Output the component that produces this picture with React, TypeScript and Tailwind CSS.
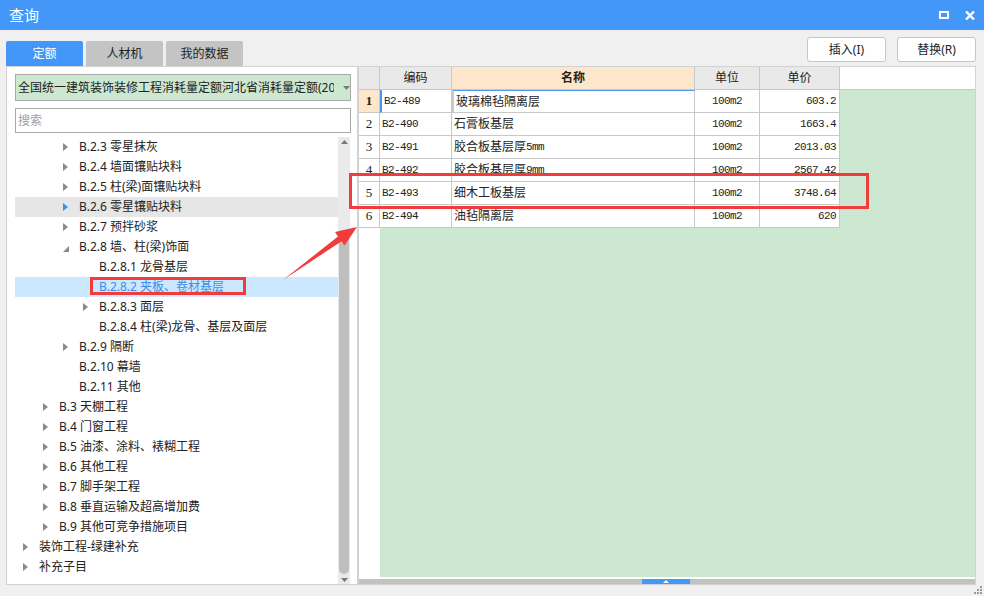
import React from "react";

type TreeRow = { lv: number; arrow?: "r" | "d"; text: string; hover?: boolean; selected?: boolean };

const tree: TreeRow[] = [
  { lv: 2, arrow: "r", text: "B.2.3 零星抹灰" },
  { lv: 2, arrow: "r", text: "B.2.4 墙面镶贴块料" },
  { lv: 2, arrow: "r", text: "B.2.5 柱(梁)面镶贴块料" },
  { lv: 2, arrow: "r", text: "B.2.6 零星镶贴块料", hover: true },
  { lv: 2, arrow: "r", text: "B.2.7 预拌砂浆" },
  { lv: 2, arrow: "d", text: "B.2.8 墙、柱(梁)饰面" },
  { lv: 3, text: "B.2.8.1 龙骨基层" },
  { lv: 3, text: "B.2.8.2 夹板、卷材基层", selected: true },
  { lv: 3, arrow: "r", text: "B.2.8.3 面层" },
  { lv: 3, text: "B.2.8.4 柱(梁)龙骨、基层及面层" },
  { lv: 2, arrow: "r", text: "B.2.9 隔断" },
  { lv: 2, text: "B.2.10 幕墙" },
  { lv: 2, text: "B.2.11 其他" },
  { lv: 1, arrow: "r", text: "B.3 天棚工程" },
  { lv: 1, arrow: "r", text: "B.4 门窗工程" },
  { lv: 1, arrow: "r", text: "B.5 油漆、涂料、裱糊工程" },
  { lv: 1, arrow: "r", text: "B.6 其他工程" },
  { lv: 1, arrow: "r", text: "B.7 脚手架工程" },
  { lv: 1, arrow: "r", text: "B.8 垂直运输及超高增加费" },
  { lv: 1, arrow: "r", text: "B.9 其他可竞争措施项目" },
  { lv: 0, arrow: "r", text: "装饰工程-绿建补充" },
  { lv: 0, arrow: "r", text: "补充子目" },
];

const rows = [
  { code: "B2-489", name: "玻璃棉毡隔离层", unit: "100m2", price: "603.2" },
  { code: "B2-490", name: "石膏板基层", unit: "100m2", price: "1663.4" },
  { code: "B2-491", name: "胶合板基层厚", suffix: "5mm", unit: "100m2", price: "2013.03" },
  { code: "B2-492", name: "胶合板基层厚", suffix: "9mm", unit: "100m2", price: "2567.42" },
  { code: "B2-493", name: "细木工板基层", unit: "100m2", price: "3748.64" },
  { code: "B2-494", name: "油毡隔离层", unit: "100m2", price: "620" },
];

const mono = "font-['Liberation_Mono',monospace] text-[11px] tracking-[-0.6px]";

function Arrow({ kind, blue }: { kind?: "r" | "d"; blue?: boolean }) {
  if (kind === "d")
    return (
      <svg width="6" height="6" className="mt-[3px]">
        <polygon points="6,0 6,6 0,6" fill="#8a8a8a" />
      </svg>
    );
  if (kind === "r")
    return (
      <svg width="5" height="8">
        <polygon points="0,0 5,4 0,8" fill={blue ? "#3d8ee8" : "#8a8a8a"} />
      </svg>
    );
  return null;
}

export default function App() {
  return (
    <div className="relative flex h-[596px] w-[984px] flex-col overflow-hidden bg-[#f0f0f0] font-['Noto_Sans','Noto_Sans_CJK_SC',sans-serif] text-[12px] text-[#222]">
      {/* title bar */}
      <div className="flex h-[30px] items-center bg-[#4297f8] pl-[9px] pr-[9px] text-white">
        <span className="text-[15px]">查询</span>
        <div className="ml-auto flex items-center gap-[16px]">
          <div className="h-[8px] w-[10px] border-2 border-white" />
          <svg width="10" height="9" viewBox="0 0 10 9">
            <path d="M1 0.5 L9 8.5 M9 0.5 L1 8.5" stroke="white" strokeWidth="2.4" />
          </svg>
        </div>
      </div>

      {/* tabs + buttons */}
      <div className="flex h-[36px] pl-[6px] pr-[8px]">
        <div className="flex items-end gap-[3px]">
          <div className="flex h-[25px] w-[77px] items-center justify-center rounded-t-[2px] bg-[#4297f8] text-white">定额</div>
          <div className="flex h-[25px] w-[77px] items-center justify-center rounded-t-[2px] bg-[#c4c4c4]">人材机</div>
          <div className="flex h-[25px] w-[77px] items-center justify-center rounded-t-[2px] bg-[#c4c4c4]">我的数据</div>
        </div>
        <div className="ml-auto flex gap-[11px] pt-[7px]">
          <button className="h-[25px] w-[79px] rounded-[3px] border border-[#c6c6c6] bg-white">插入(I)</button>
          <button className="h-[25px] w-[79px] rounded-[3px] border border-[#c6c6c6] bg-white">替换(R)</button>
        </div>
      </div>

      {/* main */}
      <div className="flex h-[519px] pl-[6px]">
        {/* left panel */}
        <div className="flex w-[352px] flex-col border border-[#d2d2d2] bg-white pl-[8px] pr-[6px] pt-[7px]">
          <div className="flex h-[27px] items-center border border-[#a9a9a9] bg-[#cde8d1] pl-[2px]">
            <span className="w-[318px] overflow-hidden whitespace-nowrap">全国统一建筑装饰装修工程消耗量定额河北省消耗量定额(2018)</span>
            <svg width="7" height="4" className="ml-[9px]">
              <polygon points="0,0 7,0 3.5,4" fill="#7a7a7a" />
            </svg>
          </div>
          <div className="mt-[7px] flex h-[25px] items-center border border-[#a9a9a9] pl-[2px] text-[#a0a0a0]">搜索</div>
          <div className="mt-[4px] flex h-[447px]">
            <div className="w-[323px]">
              {tree.map((r) => (
                <div
                  key={r.text}
                  className={`flex h-[20px] items-center whitespace-nowrap ${r.hover ? "bg-[#e6e6e6]" : ""} ${r.selected ? "bg-[#cce8ff] text-[#3a8ee6]" : ""}`}
                  style={{ paddingLeft: 8 + 20 * r.lv }}
                >
                  <div className="flex w-[16px] items-center">
                    <Arrow kind={r.arrow} blue={r.hover} />
                  </div>
                  <span>{r.text}</span>
                </div>
              ))}
            </div>
            <div className="flex w-[12px] flex-col items-center bg-[#eaeaea] pb-[2px] pt-[3px]">
              <svg width="7" height="4">
                <polygon points="0,4 7,4 3.5,0" fill="#777" />
              </svg>
              <div className="mt-[86px] w-[10px] flex-1 rounded-full bg-[#bebebe]" />
              <svg width="7" height="4" className="mt-[4px]">
                <polygon points="0,0 7,0 3.5,4" fill="#777" />
              </svg>
            </div>
          </div>
        </div>

        {/* right table panel */}
        <div className="flex w-[618px] flex-col border border-[#d2d2d2] bg-white">
          <div className="flex h-[23px] border-b border-[#c8c8c8] text-[12px]">
            <div className="w-[21px] border-r border-[#c8c8c8] bg-[#e9e9e9]" />
            <div className="flex w-[72px] items-center justify-center border-r border-[#c8c8c8] bg-[#e9e9e9]">编码</div>
            <div className="flex w-[243px] items-center justify-center border-r border-[#c8c8c8] bg-[#fde6c9] font-bold">名称</div>
            <div className="flex w-[65px] items-center justify-center border-r border-[#c8c8c8] bg-[#e9e9e9]">单位</div>
            <div className="flex w-[80px] items-center justify-center border-r border-[#c8c8c8] bg-[#e9e9e9]">单价</div>
            <div className="flex-1" />
          </div>
          {rows.map((r, i) => (
            <div key={r.code} className="flex h-[23px]">
              <div className={`flex w-[21px] items-center justify-center border-b border-r border-[#c8c8c8] font-['Liberation_Serif',serif] text-[13px] ${i === 0 ? "bg-[#fde6c9] font-bold" : ""}`}>{i + 1}</div>
              <div className={`flex w-[72px] items-center border-b border-r border-[#c8c8c8] pl-[2px] ${mono} ${i === 0 ? "border-l-2 border-l-[#4297f8] pl-0" : ""}`}>{r.code}</div>
              <div className={`flex w-[243px] items-center border-b border-r border-[#c8c8c8] pl-[2px] ${i === 0 ? "border-2 border-[#707070] border-t-[#4a9af8] border-t-[1px] pl-0" : ""}`}>
                <span>{r.name}</span>
                {r.suffix && <span className={mono}>{r.suffix}</span>}
              </div>
              <div className={`flex w-[65px] items-center justify-center border-b border-r border-[#c8c8c8] ${mono}`}>{r.unit}</div>
              <div className={`flex w-[80px] items-center justify-end border-b border-r border-[#c8c8c8] pr-[3px] ${mono}`}>{r.price}</div>
              <div className="flex-1 bg-[#cde8d1]" />
            </div>
          ))}
          <div className="flex flex-1">
            <div className="w-[21px]" />
            <div className="flex-1 bg-[#cde8d1]" />
          </div>
          <div className="mt-[2px] flex h-[5px] bg-[#c2c2c2] pl-[283px]">
            <div className="flex h-[5px] w-[48px] items-center justify-center bg-[#4297f8]">
              <svg width="6" height="3">
                <polygon points="0,3 6,3 3,0" fill="white" />
              </svg>
            </div>
          </div>
        </div>
      </div>

      {/* resize grip */}
      <svg width="9" height="9" className="absolute bottom-[1px] right-[1px]">
        <rect x="6" y="0" width="2" height="2" fill="#9a9a9a" />
        <rect x="3" y="3" width="2" height="2" fill="#9a9a9a" />
        <rect x="6" y="3" width="2" height="2" fill="#9a9a9a" />
        <rect x="0" y="6" width="2" height="2" fill="#9a9a9a" />
        <rect x="3" y="6" width="2" height="2" fill="#9a9a9a" />
        <rect x="6" y="6" width="2" height="2" fill="#9a9a9a" />
      </svg>

      {/* red annotations */}
      <div className="pointer-events-none absolute left-[90px] top-[277px] h-[18px] w-[156px] border-[3px] border-[#f23c3c]" />
      <div className="pointer-events-none absolute left-[349px] top-[173px] h-[36px] w-[520px] border-[3px] border-[#f23c3c]" />
      <svg width="984" height="596" className="pointer-events-none absolute left-0 top-0">
        <polygon points="283,280 338,236.4 335,232 357,227 344.5,245.5 341.6,241.2" fill="#f23c3c" />
      </svg>
    </div>
  );
}
